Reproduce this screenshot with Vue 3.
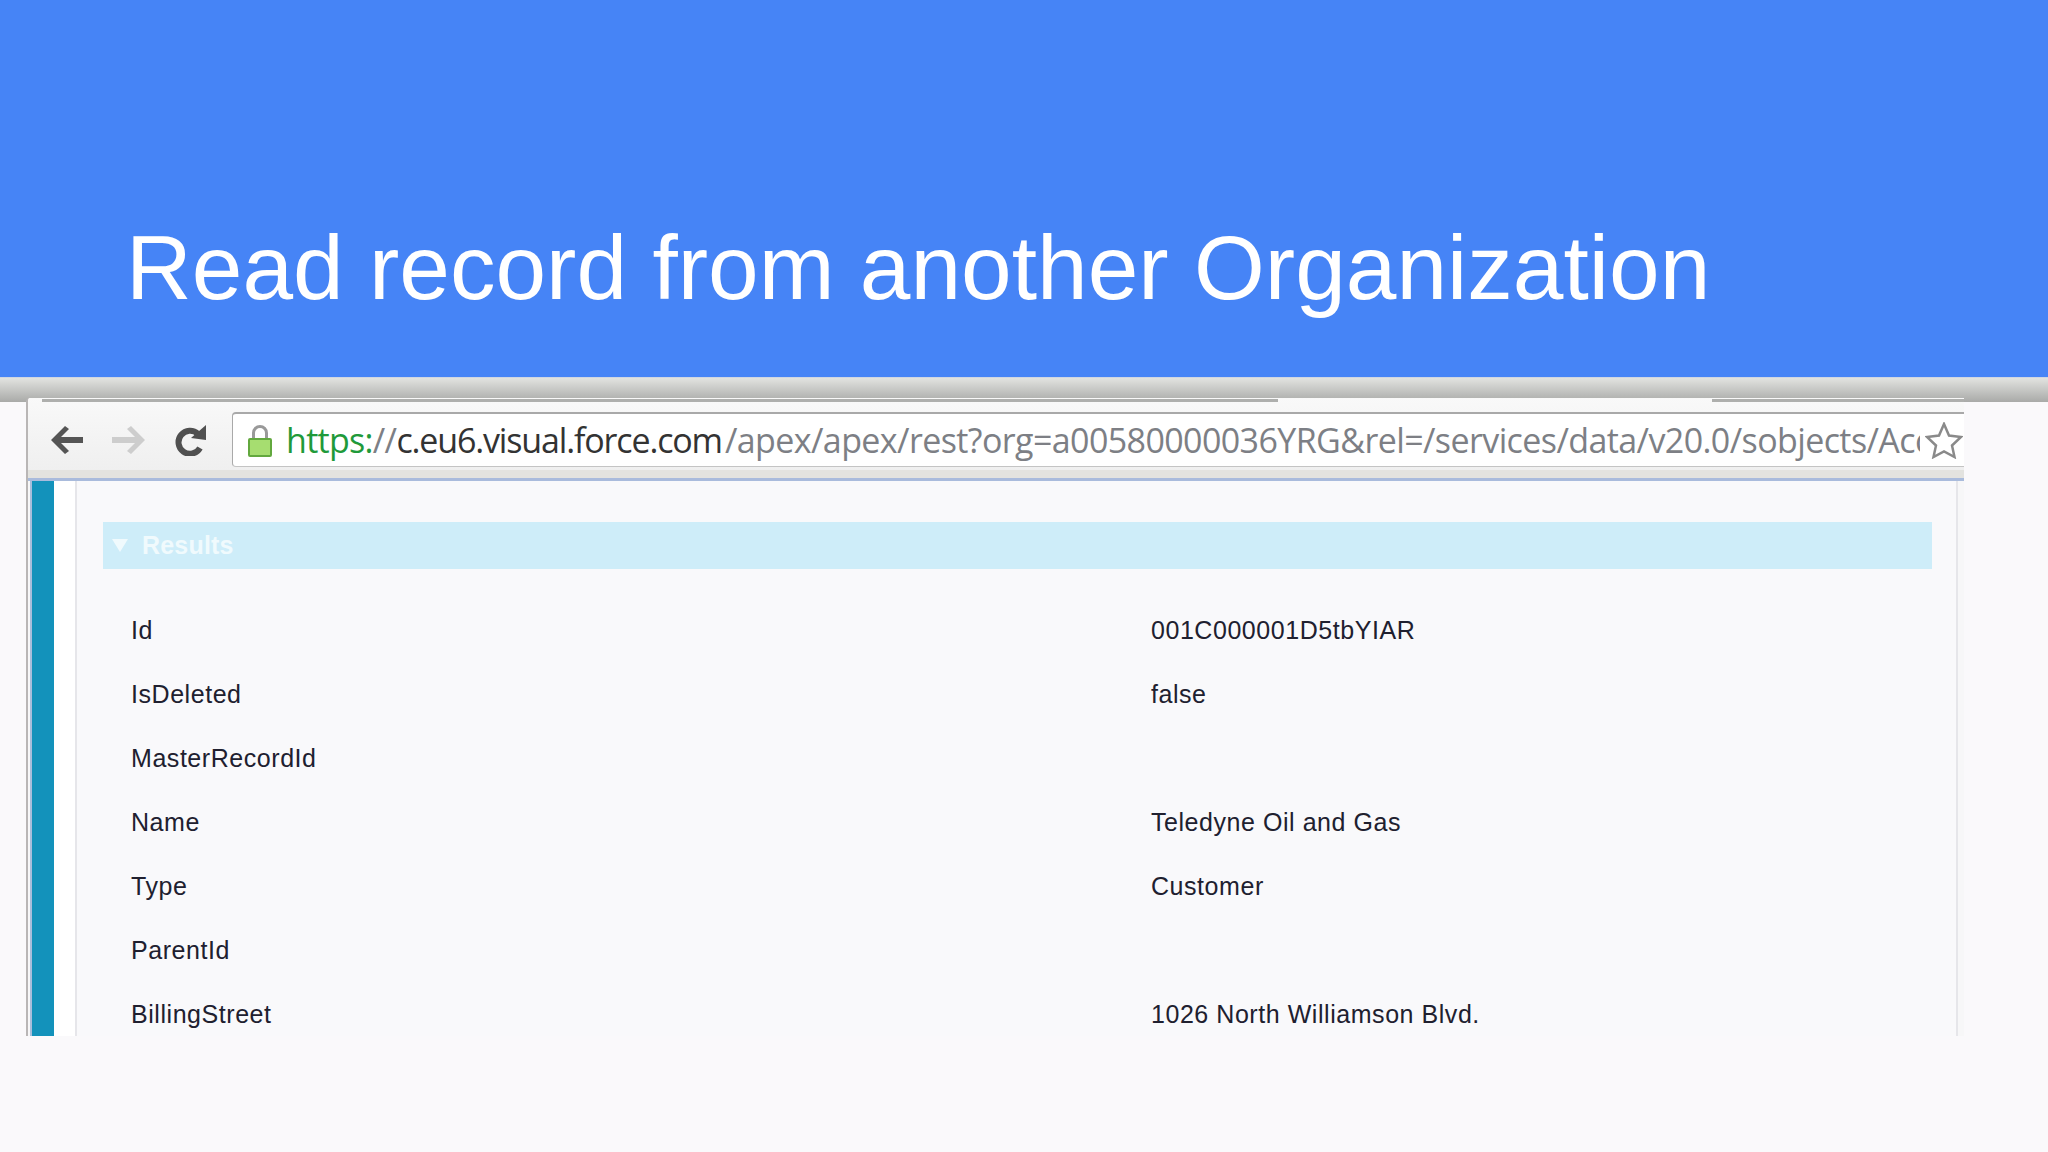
<script setup>
const rows = [
  ['Id', '001C000001D5tbYIAR'],
  ['IsDeleted', 'false'],
  ['MasterRecordId', ''],
  ['Name', 'Teledyne Oil and Gas'],
  ['Type', 'Customer'],
  ['ParentId', ''],
  ['BillingStreet', '1026 North Williamson Blvd.'],
]
</script>

<template>
  <div class="slide">
    <header class="head">
      <h1>Read record from another Organization</h1>
    </header>
    <div class="band"></div>
    <section class="shot">
      <div class="toolbar">
        <span class="tabline first"></span>
        <span class="tabline second"></span>
        <div class="navs">
          <svg class="ico" width="32" height="28" viewBox="0 0 32 28"><path d="M0 14 14 0l4 3-8 8h22v6H10l8 8-4 3z" fill="#555"/></svg>
          <svg class="ico" width="33" height="28" viewBox="0 0 33 28"><path d="M33 14 19 0l-4 3 8 8H0v6h23l-8 8 4 3z" fill="#cdcdcd"/></svg>
          <svg class="ico" width="32" height="32" viewBox="0 0 32 32"><path d="M24 10A11.500 11.500 0 1 0 26 24" fill="none" stroke="#505050" stroke-width="6"/><path d="M17 14 32 1v15z" fill="#505050"/></svg>
        </div>
        <div class="address">
          <svg class="lock" width="24" height="33" viewBox="0 0 24 33"><path d="M5.500 16V9a6.500 6.500 0 0 1 13 0v7" fill="none" stroke="#999" stroke-width="3"/><rect x="1" y="15" width="22" height="17" rx="1" fill="#a6dd70" stroke="#62a83e" stroke-width="2"/></svg>
          <div class="url"><span class="green">https:</span><span class="grey lead">//</span><span class="dark">c.eu6.visual.force.com</span><span class="grey rest">/apex/apex/rest?org=a00580000036YRG&amp;rel=/services/data/v20.0/sobjects/Account</span></div>
          <svg class="star" width="38" height="37" viewBox="0 0 38 37"><path d="M19 2l5 11.500 12 1.500-9 8.500 2.500 11.500L19 29.500 8.500 35 11 23.500 2 15l12-1.500z" fill="#fff" stroke="#8a8a8a" stroke-width="2.500"/></svg>
        </div>
      </div>
      <div class="page">
        <div class="stripe"></div>
        <div class="white"></div>
        <div class="content">
          <div class="results"><span class="tri"></span><span>Results</span></div>
          <div class="table">
            <div v-for="r in rows" :key="r[0]" class="row">
              <span class="label">{{ r[0] }}</span>
              <span class="value">{{ r[1] }}</span>
            </div>
          </div>
        </div>
      </div>
    </section>
  </div>
</template>

<style>
html, body { margin: 0; background: #faf9fb; }
</style>

<style scoped>
.slide { width: 2048px; height: 1152px; overflow: hidden; background: #faf9fb; font-family: "Liberation Sans", Arial, sans-serif; }
.head { height: 377px; background: #4684f6; box-sizing: border-box; padding: 215px 0 0 126px; }
h1 { margin: 0; font-size: 91px; line-height: 106px; font-weight: 400; color: #fff; white-space: nowrap; letter-spacing: .03px; }
.band { height: 24px; background: linear-gradient(#e2e3e0, #a9aaa8); border-top: 1px solid #cfd6e2; }
.shot { width: 1938px; height: 638px; margin: -4px 0 0 26px; position: relative; display: flex; flex-direction: column; border-left: 2px solid #b9b6b6; border-radius: 4px 0 0 0; box-sizing: border-box; overflow: hidden; background: #f7f7f8; }
.toolbar { height: 83px; flex: none; position: relative; box-sizing: border-box; padding-top: 14px; display: flex; background: linear-gradient(#f9f9f9, #eeeeee); border-bottom: 3px solid #a9bbdc; box-shadow: inset 0 -8px #e3e3df; }
.tabline { position: absolute; top: 1px; height: 3px; background: #aeafad; }
.first { left: 14px; width: 1236px; }
.second { left: 1684px; right: 0; }
.navs { width: 204px; height: 55px; flex: none; display: flex; align-items: center; gap: 29px; padding-left: 23px; box-sizing: border-box; }
.ico { flex: none; }
.address { flex: 1; min-width: 0; height: 55px; display: flex; align-items: center; box-sizing: border-box; background: #fff; border: 1px solid #a9a9a9; border-top-width: 2px; border-right: 0; border-bottom-color: #c4c4c4; border-radius: 4px 0 0 4px; padding-left: 15px; }
.lock { flex: none; }
.url { flex: none; width: 1634px; margin-left: 14px; overflow: hidden; white-space: nowrap; font-family: "Open Sans", sans-serif; font-size: 34px; line-height: 48px; color: #7d7f85; }
.green { color: #1f9a3a; letter-spacing: -.7px; }
.lead { letter-spacing: -.7px; }
.grey { color: #7d7f85; }
.dark { color: #333; letter-spacing: -1.15px; }
.rest { letter-spacing: -.6px; padding-left: 3px; }
.star { flex: none; margin-left: 5px; }
.page { flex: 1; min-height: 0; display: flex; }
.stripe { width: 24px; margin-left: 2px; flex: none; background: #1392bb; border-left: 2px solid #a9bedb; box-sizing: border-box; }
.white { width: 21px; flex: none; background: #fff; border-right: 2px solid #e6e6ea; }
.content { width: 1881px; flex: none; background: #f9f9fb; border-right: 2px solid #e6e6ea; box-sizing: border-box; padding: 41px 24px 0 26px; }
.results { height: 47px; background: #ceedf9; display: flex; align-items: center; color: #f0fafd; font-weight: 700; font-size: 25px; letter-spacing: .2px; }
.tri { width: 0; height: 0; margin: 0 14px 0 9px; border-left: 8px solid transparent; border-right: 8px solid transparent; border-top: 13px solid #f0fafd; }
.table { padding-top: 29px; }
.row { height: 64px; display: flex; align-items: center; font-size: 25px; color: #20202f; letter-spacing: .55px; }
.label { width: 1048px; flex: none; padding-left: 28px; box-sizing: border-box; }
.value { white-space: nowrap; }
</style>
